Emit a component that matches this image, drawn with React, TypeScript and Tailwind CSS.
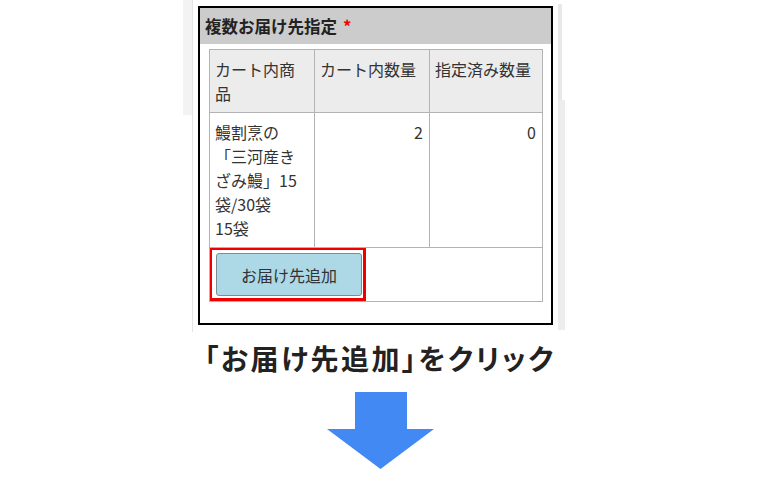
import clsx from "clsx";

const cell = "border border-[#b3b3b3] align-top px-[5px] py-[7px]";

export default function App() {
  return (
    <div
      className="w-[760px] h-[477px] bg-white overflow-hidden text-[#333]"
      style={{ fontFamily: '"Noto Sans CJK JP", "Noto Sans", sans-serif' }}
    >
      <div className="flex h-[332px] ml-[183px]">
        <div className="w-[9px] h-[115px] bg-[#f3f3f3]" />
        <div className="w-px bg-[#e4e4e4]" />
        <div className="w-[5px]" />
        <div className="pt-[6px]">
          <div className="w-[355px] h-[319px] border-2 border-black bg-white">
            <div className="h-[36px] bg-[#cccccc] px-[5px] flex items-center text-[16.5px] font-bold text-[#222] leading-none">
              複数お届け先指定
              <span className="text-[#e00] ml-[6px]">*</span>
            </div>
            <table className="mt-[5px] mx-[9px] w-[333px] border-collapse text-[16px] leading-[24px] table-fixed">
              <colgroup>
                <col className="w-[105px]" />
                <col className="w-[115px]" />
                <col className="w-[113px]" />
              </colgroup>
              <thead>
                <tr className="bg-[#ececec]">
                  <th className={clsx(cell, "font-normal text-left")}>カート内商品</th>
                  <th className={clsx(cell, "font-normal text-left whitespace-nowrap")}>カート内数量</th>
                  <th className={clsx(cell, "font-normal text-left whitespace-nowrap")}>指定済み数量</th>
                </tr>
              </thead>
              <tbody>
                <tr>
                  <td className={cell}>
                    鰻割烹の
                    <br />
                    「三河産き
                    <br />
                    ざみ鰻」15
                    <br />
                    袋/30袋
                    <br />
                    15袋
                  </td>
                  <td className={clsx(cell, "text-right pr-[6px]")}>2</td>
                  <td className={clsx(cell, "text-right pr-[6px]")}>0</td>
                </tr>
                <tr>
                  <td colSpan={3} className="border border-[#b3b3b3] p-0 h-[54px] align-top">
                    <div className="w-[157px] h-[54px] -ml-px -mt-px border-[3px] border-[#ee0000] pt-[3px] pl-[4px]">
                      <button className="w-[146px] h-[43px] bg-[#add8e6] border border-[#7a8e96] rounded-[3px] text-[16px] text-[#333]">
                        お届け先追加
                      </button>
                    </div>
                  </td>
                </tr>
              </tbody>
            </table>
          </div>
        </div>
        <div className="w-[5px]" />
        <div className="flex flex-col pt-[4px]">
          <div className="w-[4px] h-[96px] bg-[#e8e8e8]" />
          <div className="w-[7px] h-[230px] bg-[#ededed]" />
        </div>
      </div>

      <div
        className="mt-[6px] h-[40px] flex items-center justify-center text-[28px] tracking-[2.5px] font-bold text-[#222] leading-none"
        style={{ fontFeatureSettings: '"palt"' }}
      >
        「お届け先追加」をクリック
      </div>

      <svg className="block mx-auto mt-[14px]" width="107" height="77" viewBox="0 0 107 77">
        <polygon points="28,0 80,0 80,37 107,37 53.5,77 0,37 28,37" fill="#4289f4" />
      </svg>
    </div>
  );
}
